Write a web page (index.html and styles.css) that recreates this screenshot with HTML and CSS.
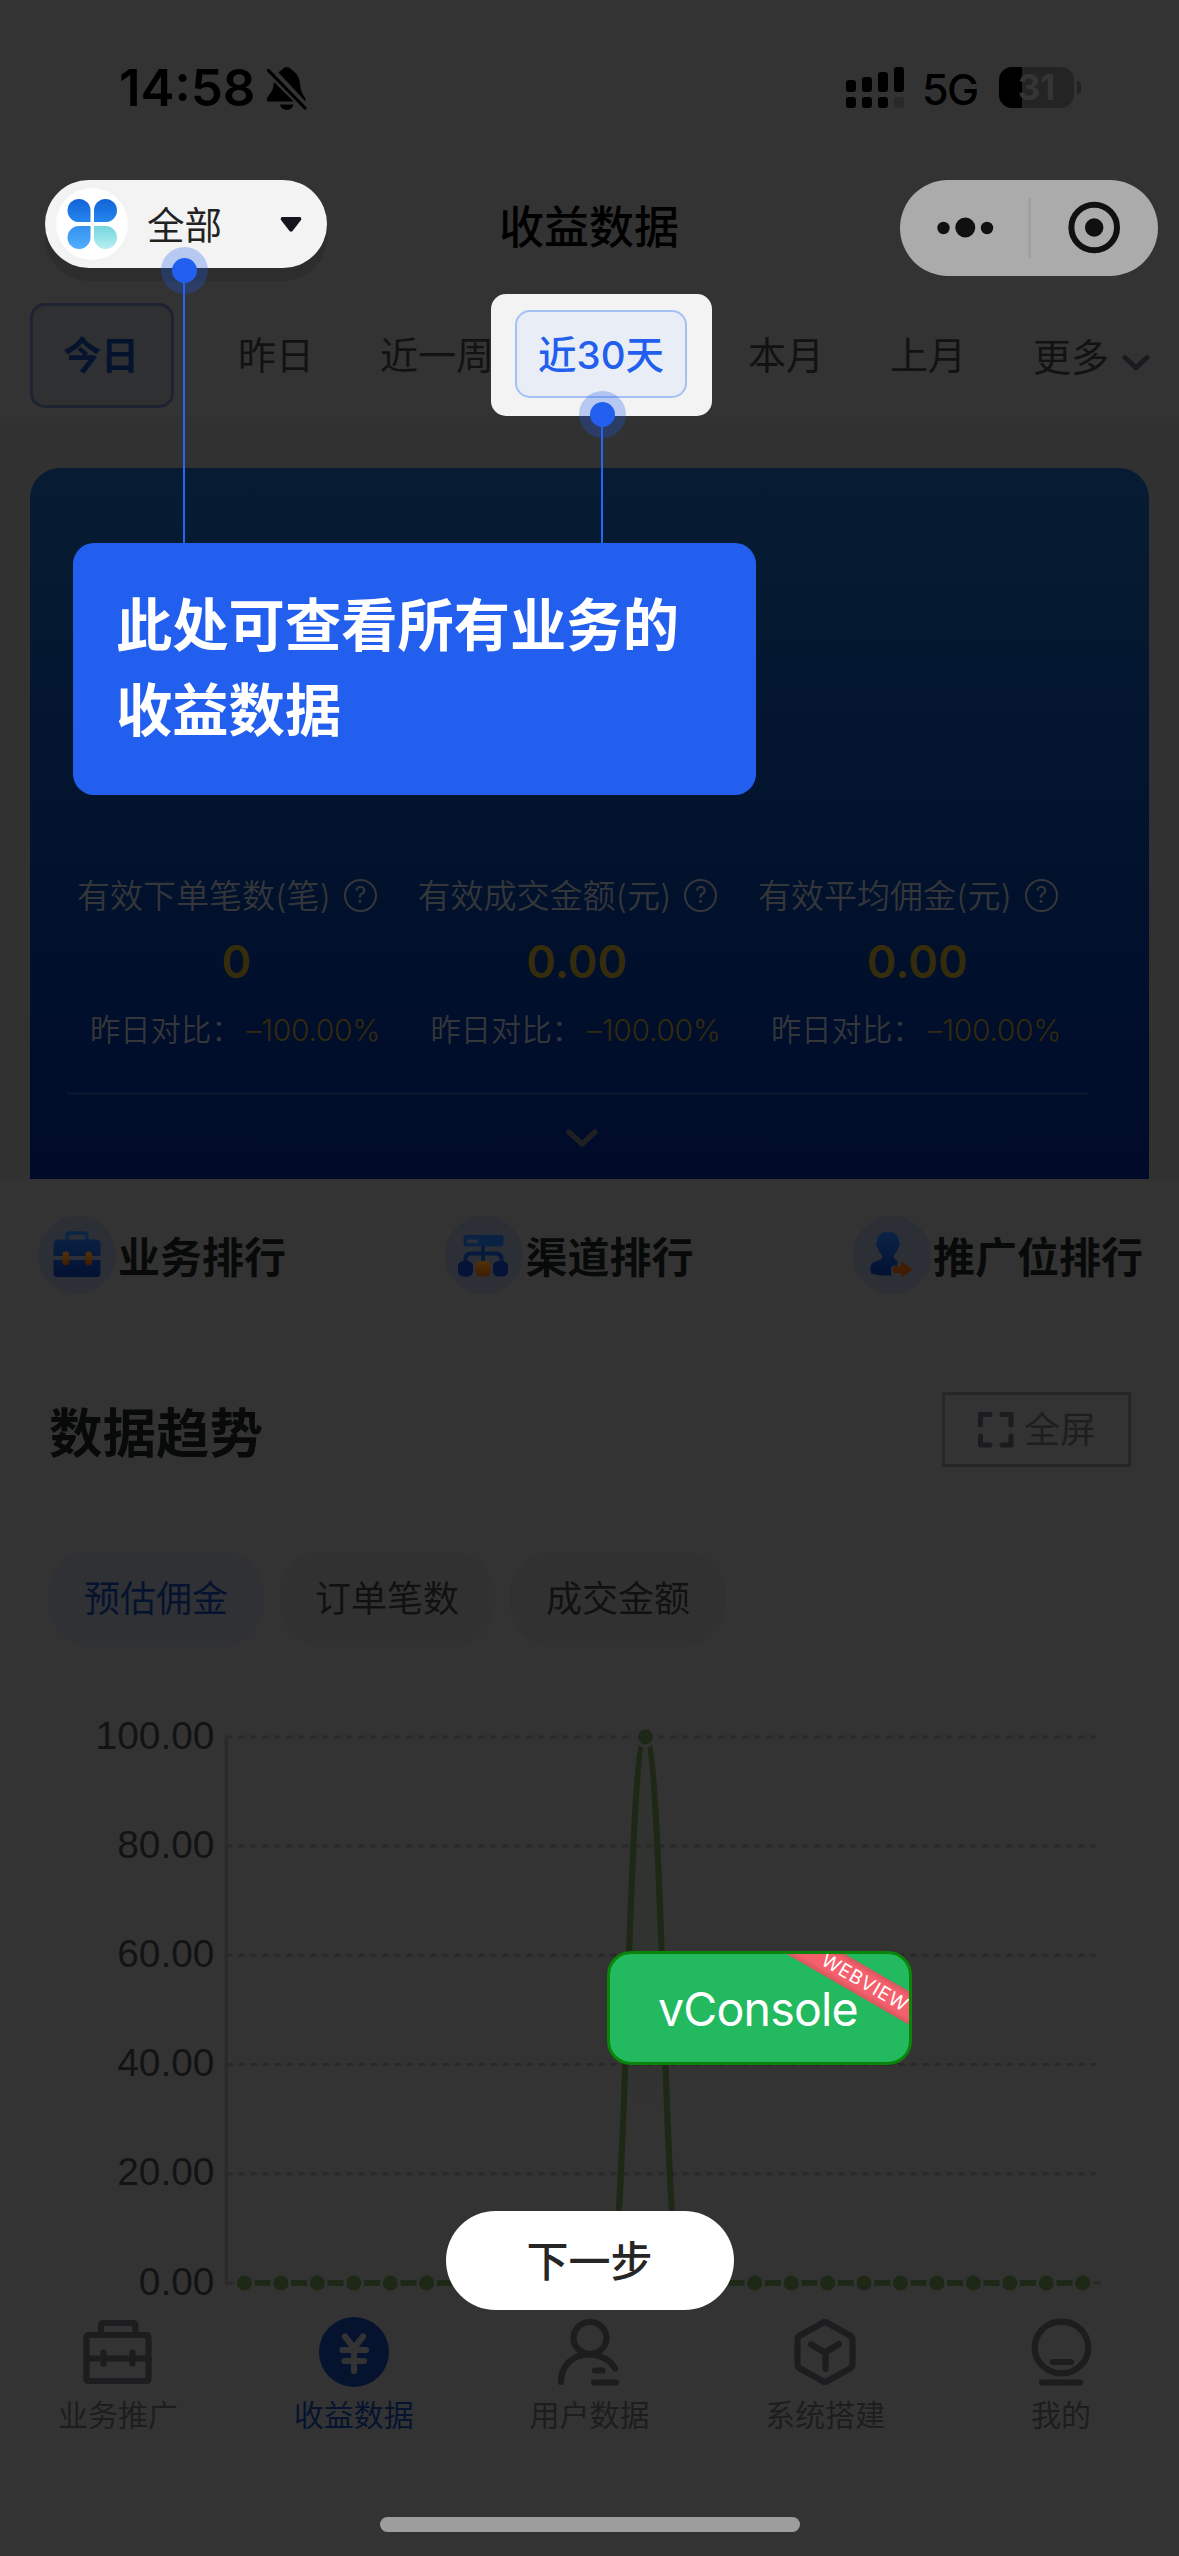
FILE: index.html
```html
<!DOCTYPE html>
<html lang="zh-CN">
<head>
<meta charset="utf-8">
<title>收益数据</title>
<link rel="stylesheet" href="styles.css">
</head>
<body>
<div class="screen">
  <header class="top">
    <div class="status">
      <span class="clock">14:58</span>
      <svg class="bell" viewBox="0 0 42 44" width="42" height="44">
        <path d="M12.500 5.500C15 2.800 16 3.500 17 1.500C18.500-.3 23-.3 24.500 1.500C25.500 3.500 31 5 33 12C35 20 33.500 23 39.500 31.500L39.500 34.500Z"/>
        <path d="M8 15C7 22 6.500 24 3 28C.5 31 .5 33 1.500 34.500H27.500Z"/>
        <path d="M14 37.500H27.500C26.500 44.500 15 44.500 14 37.500Z"/>
        <path d="M2.500 3.500L39 41" fill="none" stroke="#000" stroke-width="3.200" stroke-linecap="round"/>
      </svg>
      <svg class="signal" viewBox="0 0 58 41" width="58" height="41">
        <rect x="0" y="13" width="10" height="12" rx="3"/><rect x="16" y="10" width="10" height="15" rx="3"/>
        <rect x="32" y="5" width="10" height="20" rx="3"/><rect x="48" y="0" width="10" height="25" rx="3"/>
        <rect x="0" y="30" width="10" height="11" rx="3"/><rect x="16" y="30" width="10" height="11" rx="3"/>
        <rect x="32" y="30" width="10" height="11" rx="3"/><rect x="48" y="30" width="10" height="11" rx="3" fill="#292929"/>
      </svg>
      <span class="net">5G</span>
      <div class="battery">31</div>
      <i class="battery-cap"></i>
    </div>

    <div class="nav">
      <div class="picker">
        <span class="picker-icon">
          <svg viewBox="0 0 72 72" width="72" height="72">
            <defs>
              <linearGradient id="pa" x1="0" y1="0" x2="0" y2="1"><stop offset="0" stop-color="#1263d9"/><stop offset="1" stop-color="#2686ed"/></linearGradient>
              <linearGradient id="pb" x1="0" y1="0" x2="0" y2="1"><stop offset="0" stop-color="#3491ee"/><stop offset="1" stop-color="#52aeff"/></linearGradient>
              <linearGradient id="pc" x1="0" y1="0" x2="0" y2="1"><stop offset="0" stop-color="#73d6dd"/><stop offset="1" stop-color="#b8eff2"/></linearGradient>
            </defs>
            <path fill="url(#pa)" d="M34.500 34H23A11.500 11.500 0 1 1 34.500 22.500Z"/>
            <path fill="url(#pa)" d="M38 34V22.500A11.500 11.500 0 1 1 49.500 34Z"/>
            <path fill="url(#pb)" d="M34.500 38V49A11.500 11.500 0 1 1 23 38Z"/>
            <path fill="url(#pc)" d="M38 38H49.500A11.500 11.500 0 1 1 38 49Z"/>
          </svg>
        </span>
        <span class="picker-text">全部</span>
        <svg class="caret" viewBox="0 0 22 15" width="22" height="15"><path fill="#15141f" d="M2 0H20Q22 1 21 3L12.500 14Q11 15.500 9.500 14L1 3Q0 1 2 0Z"/></svg>
      </div>
      <h1 class="title">收益数据</h1>
      <svg class="capsule" viewBox="0 0 258 96" width="258" height="96">
        <rect width="258" height="96" rx="48" fill="#ababab"/>
        <path d="M129.500 18V78" stroke="#9a9a9a" stroke-width="1.500"/>
        <g fill="#101010"><circle cx="43.500" cy="48" r="6.200"/><circle cx="65.300" cy="47.500" r="10"/><circle cx="87" cy="48" r="6.200"/><circle cx="194.200" cy="47.500" r="9.200"/></g>
        <circle cx="194.200" cy="47.500" r="22.800" fill="none" stroke="#101010" stroke-width="6"/>
      </svg>
    </div>

    <div class="tabs">
      <span class="tab tab-on">今日</span>
      <span class="tab t2">昨日</span>
      <span class="tab t3">近一周</span>
      <span class="spot"><span class="spot-tab">近30天</span></span>
      <span class="tab t5">本月</span>
      <span class="tab t6">上月</span>
      <span class="tab t7">更多</span>
      <svg class="more" viewBox="0 0 28 18" width="28" height="18"><path d="M3 3.500L14 14L25 3.500" fill="none" stroke="#1b1b1f" stroke-width="5" stroke-linecap="round" stroke-linejoin="round"/></svg>
    </div>
  </header>

  <section class="summary">
    <div class="card">
      <div class="stats">
        <div class="stat">
          <div class="stat-name">有效下单笔数(笔)<i class="help">?</i></div>
          <div class="stat-value">0</div>
          <div class="stat-diff">昨日对比：<b>–100.00%</b></div>
        </div>
        <div class="stat">
          <div class="stat-name">有效成交金额(元)<i class="help">?</i></div>
          <div class="stat-value">0.00</div>
          <div class="stat-diff">昨日对比：<b>–100.00%</b></div>
        </div>
        <div class="stat">
          <div class="stat-name">有效平均佣金(元)<i class="help">?</i></div>
          <div class="stat-value">0.00</div>
          <div class="stat-diff">昨日对比：<b>–100.00%</b></div>
        </div>
      </div>
      <div class="expand">
        <svg viewBox="0 0 34 20" width="34" height="20"><path d="M4 4L17 16L30 4" fill="none" stroke="#202022" stroke-width="5.500" stroke-linecap="round" stroke-linejoin="round"/></svg>
      </div>
    </div>
  </section>

  <section class="ranks">
    <div class="rank">
      <svg viewBox="0 0 78 78" width="78" height="78">
        <defs>
          <linearGradient id="bl" gradientUnits="userSpaceOnUse" x1="0" y1="15" x2="0" y2="61"><stop offset="0" stop-color="#0b2547"/><stop offset="1" stop-color="#031031"/></linearGradient>
          <linearGradient id="og" x1="0" y1="0" x2="0" y2="1"><stop offset="0" stop-color="#503307"/><stop offset="1" stop-color="#401b02"/></linearGradient>
        </defs>
        <circle cx="39" cy="39" r="39" fill="#2d2f36"/>
        <path d="M29 25V20Q29 17 32 17H46Q49 17 49 20V25" fill="none" stroke="#0b2547" stroke-width="3.500"/>
        <path fill="url(#bl)" d="M20 23.500H58Q62.500 23.500 62.500 28V40H15.500V28Q15.500 23.500 20 23.500ZM15.500 44H62.500V57Q62.500 61 58.500 61H19.500Q15.500 61 15.500 57Z"/>
        <rect x="24.500" y="35.500" width="6.500" height="14" rx="3.200" fill="url(#og)"/><rect x="47.500" y="35.500" width="6.500" height="14" rx="3.200" fill="url(#og)"/>
      </svg>
      <span>业务排行</span>
    </div>
    <div class="rank">
      <svg viewBox="0 0 78 78" width="78" height="78">
        <circle cx="39" cy="39" r="39" fill="#2d2f36"/>
        <path d="M38 28V46M20.500 46V43Q20.500 37.500 26 37.500H51Q56.500 37.500 56.500 43V46" fill="none" stroke="#061a3c" stroke-width="4"/>
        <rect x="18.500" y="19" width="40" height="11.500" rx="3" fill="#0a2244"/><rect x="22" y="23.500" width="11" height="3.500" rx="1" fill="#2d3138"/>
        <rect x="13" y="45" width="15" height="15.500" rx="5.500" fill="#051436"/><rect x="48" y="45" width="15" height="15.500" rx="5.500" fill="#051436"/>
        <rect x="30.500" y="45" width="15" height="15.500" rx="5" fill="url(#og)"/>
      </svg>
      <span>渠道排行</span>
    </div>
    <div class="rank">
      <svg viewBox="0 0 78 78" width="78" height="78">
        <circle cx="39" cy="39" r="39" fill="#2d2f36"/>
        <path fill="url(#bl)" d="M35 15.500C42 15.500 46 20 46 26C47.500 27.500 46.500 31 45 32.500C44 37 41 38 40.500 41C41 44 44.500 43 44.500 47V49.500H41Q38 50 38 53Q38 56 38.500 59.500C28 60 21 58.500 18 57.500C17 52 17 49 20 46.500C24 44 29 45 29.500 41C29 38 26 37 25 32.500C23 31 22.500 28 24 26C24 19 29 15.500 35 15.500Z"/>
        <path fill="#401c02" d="M40 50.500H48V45.500L60 53.500L48 61.500V57H40Z"/>
      </svg>
      <span>推广位排行</span>
    </div>
  </section>

  <section class="trend-head">
    <h2>数据趋势</h2>
    <div class="full">
      <svg viewBox="0 0 36 36" width="36" height="36"><path d="M2.500 13V2.500H12M24 2.500H33V13M33 24V33H24M12 33H2.500V24" fill="none" stroke="#1c1c20" stroke-width="5" stroke-linecap="round" stroke-linejoin="round"/></svg>
      <span>全屏</span>
    </div>
  </section>

  <section class="chips">
    <span class="chip chip-on">预估佣金</span>
    <span class="chip">订单笔数</span>
    <span class="chip">成交金额</span>
  </section>

  <svg class="chart" viewBox="0 1700 1179 600" width="1179" height="600">
    <defs>
      <marker id="dot" markerUnits="userSpaceOnUse" markerWidth="24" markerHeight="24" refX="12" refY="12" orient="0">
        <circle cx="12" cy="12" r="10.500" fill="#333"/><circle cx="12" cy="12" r="7.500" fill="#1e2816"/>
      </marker>
      <linearGradient id="area" x1="0" y1="0" x2="0" y2="1"><stop offset="0" stop-color="#30332f"/><stop offset="1" stop-color="#333"/></linearGradient>
    </defs>
    <g class="y-labels">
      <text x="214.500" y="1748.500">100.00</text><text x="214.500" y="1857.500">80.00</text><text x="214.500" y="1966.500">60.00</text>
      <text x="214.500" y="2075.500">40.00</text><text x="214.500" y="2184.500">20.00</text><text x="214.500" y="2294.500">0.00</text>
    </g>
    <path d="M608.900 2283C627.100 2283 627.100 1737 645.400 1737C663.600 1737 663.600 2283 681.800 2283Z" fill="url(#area)"/>
    <path class="grid" d="M226.500 1737H1098M226.500 1846H1098M226.500 1955.300H1098M226.500 2064.500H1098M226.500 2173.700H1098"/>
    <path class="axis" d="M226.300 1737V2283H1101"/>
    <path class="line" marker-start="url(#dot)" marker-mid="url(#dot)" marker-end="url(#dot)" d="M244.500 2283L280.900 2283L317.400 2283L353.800 2283L390.300 2283L426.700 2283L463.200 2283L499.600 2283L536 2283L572.500 2283L608.900 2283C627.100 2283 627.100 1737 645.400 1737C663.600 1737 663.600 2283 681.800 2283L718.300 2283L754.700 2283L791.200 2283L827.600 2283L864 2283L900.500 2283L936.900 2283L973.400 2283L1009.800 2283L1046.300 2283L1082.700 2283"/>
  </svg>

  <nav class="tabbar">
    <div class="item">
      <svg viewBox="0 0 72 72" width="72" height="72"><path d="M19 18V9.500Q19 7 21.500 7H51Q53.500 7 53.500 9.500V18M4.500 21.500Q4.500 19 7 19H64Q66.500 19 66.500 21.500V62.500Q66.500 65 64 65H7Q4.500 65 4.500 62.500ZM5 42.500H67M21.500 36.500V47.500M50.500 36.500V47.500"/></svg>
      <span>业务推广</span>
    </div>
    <div class="item item-on">
      <svg viewBox="0 0 72 72" width="72" height="72"><circle cx="36" cy="36" r="35" fill="#06132f" stroke="none"/><path d="M27 20.500L36 32L45 20.500M24.500 34H48M26.500 45H46M36 33V55" stroke="#333"/></svg>
      <span>收益数据</span>
    </div>
    <div class="item">
      <svg viewBox="0 0 72 72" width="72" height="72"><ellipse cx="37" cy="22" rx="16.500" ry="16"/><path d="M8 66C8 50 19 38.500 36 38.500C48 38.500 58 45 62 52.500M42 54.500H49.500M41 66.500H63"/></svg>
      <span>用户数据</span>
    </div>
    <div class="item">
      <svg viewBox="0 0 72 72" width="72" height="72"><path d="M33.500 7Q36 5.500 38.500 7L61 19.500Q63.500 21 63.500 24V48Q63.500 51 61 52.500L38.500 65Q36 66.500 33.500 65L11 52.500Q8.500 51 8.500 48V24Q8.500 21 11 19.500ZM22 28.500L36 36.500L50 28M36.500 37V53"/></svg>
      <span>系统搭建</span>
    </div>
    <div class="item">
      <svg viewBox="0 0 72 72" width="72" height="72"><ellipse cx="36.500" cy="31.500" rx="26.800" ry="25.800"/><path d="M28 46H46M17 66.500H55"/></svg>
      <span>我的</span>
    </div>
  </nav>
  <div class="home"></div>

  <!-- guide layer -->
  <i class="wire wire-a"></i>
  <i class="wire wire-b"></i>
  <i class="pin pin-a"></i>
  <i class="pin pin-b"></i>
  <div class="tip">此处可查看所有业务的<br>收益数据</div>
  <div class="vconsole">vConsole<span class="ribbon">WEBVIEW</span></div>
  <div class="next">下一步</div>
</div>
</body>
</html>
```
FILE: styles.css
```css
* { box-sizing: border-box; }
body {
  margin: 0;
  background: #333;
  font-family: Inter, "Noto Sans CJK SC", sans-serif;
}
h1, h2 { margin: 0; }
i, b { font-style: normal; font-weight: 400; }
svg { display: block; flex: none; }
.screen {
  position: relative;
  width: 1179px;
  height: 2556px;
  overflow: hidden;
  display: flex;
  flex-direction: column;
}

/* status bar */
.top { height: 417px; flex: none; }
.status {
  height: 180px;
  padding: 67px 0 0 119px;
  display: flex;
  align-items: flex-start;
}
.clock { width: 147px; font-size: 51px; line-height: 42px; font-weight: 600; color: #000; white-space: nowrap; }
.signal { margin-left: 538px; }
.net { width: 77px; margin-left: 18px; font-size: 43px; line-height: 45px; font-weight: 450; color: #000; letter-spacing: -1.500px; }
.battery {
  width: 75px;
  height: 41px;
  border-radius: 13px;
  background: linear-gradient(90deg, #000 23px, #242424 23px);
  color: #353535;
  font-size: 35px;
  line-height: 41px;
  font-weight: 700;
  text-align: center;
}
.battery-cap { width: 4px; height: 13px; margin: 14px 0 0 3px; border-radius: 0 4px 4px 0; background: #222; }

/* navigation */
.nav { height: 96px; padding: 0 21px 0 45px; display: flex; align-items: flex-start; }
.picker {
  width: 282px;
  height: 88px;
  padding-left: 11px;
  border-radius: 44px;
  background: #f3f3f3;
  box-shadow: 0 13px 0 #2d2d2d;
  display: flex;
  align-items: center;
}
.picker-icon { width: 72px; height: 72px; border-radius: 50%; background: #fff; }
.picker-text { width: 133px; margin-left: 19px; padding-top: 3px; font-size: 37.500px; line-height: 88px; color: #222; }
.title { margin-left: 172px; width: 401px; font-size: 45px; line-height: 95px; font-weight: 500; color: #000; }

/* period tabs */
.tabs { height: 141px; padding: 18px 0 0 30px; display: flex; align-items: flex-start; white-space: nowrap; }
.tab { margin-top: 9px; font-size: 38px; line-height: 105px; color: #121212; }
.tab-on {
  width: 144px;
  height: 105px;
  padding-right: 2px;
  border: 3px solid #1d2331;
  border-radius: 15px;
  background: #2f3031;
  line-height: 99px;
  font-weight: 600;
  text-align: center;
  color: #06132f;
}
.t2 { margin-left: 64px; width: 142px; }
.t3 { width: 111px; }
.t5 { margin-left: 36px; width: 142px; }
.t6 { width: 143px; }
.t7 { width: 89px; padding-top: 2px; }
.more { margin-top: 60px; }
.spot {
  position: relative;
  width: 221px;
  height: 122px;
  padding: 16px 25px 18px 24px;
  border-radius: 15px;
  background: #f3f3f3;
}
.spot-tab {
  display: block;
  height: 88px;
  border: 2px solid #a5c0f6;
  border-radius: 15px;
  background: #e9edf5;
  font-size: 38.500px;
  line-height: 87px;
  font-weight: 500;
  text-align: center;
  color: #225fee;
}

/* summary card */
.summary { height: 762px; flex: none; padding: 51px 30px 0; background: #313131; }
.card {
  height: 711px;
  padding: 406px 61px 0 36px;
  border-radius: 30px 30px 0 0;
  background: linear-gradient(180deg, #071c33 0%, #03142e 45%, #000f2b 75%, #000b2a 100%);
}
.stats { height: 221px; display: flex; border-bottom: 3px solid #0a142d; }
.stat { width: 340.500px; flex: none; white-space: nowrap; }
.stat-name { height: 45px; padding-left: 11px; display: flex; align-items: center; font-size: 33px; line-height: 45px; font-weight: 350; color: #34363a; }
.help {
  width: 33px;
  height: 33px;
  margin: -2px 0 0 13px;
  border: 2.500px solid #34363a;
  border-radius: 50%;
  font-size: 23px;
  line-height: 28px;
  text-align: center;
}
.stat-value { margin-top: 16px; height: 54px; font-size: 45px; line-height: 54px; font-weight: 600; text-align: center; color: #352c0c; }
.stat-diff { margin-top: 19px; padding-left: 24px; display: flex; font-size: 30.300px; line-height: 44px; font-weight: 350; color: #34363a; }
.stat-diff b { margin-left: 5px; font-size: 30px; font-weight: 350; letter-spacing: -.3px; color: #332a0d; }
.expand { height: 84px; padding: 33px 0 0 499px; }

/* ranking entries */
.ranks { height: 192px; flex: none; padding: 37px 36px 0 38px; display: flex; justify-content: space-between; align-items: flex-start; }
.rank { display: flex; align-items: center; gap: 2px; font-size: 42px; line-height: 78px; font-weight: 600; color: #070a09; white-space: nowrap; }
.rank span { padding-top: 3px; margin-bottom: -3px; }

/* trend header */
.trend-head { height: 180px; flex: none; padding: 21px 48px 0 49px; display: flex; justify-content: space-between; align-items: flex-start; }
h2 { font-size: 53.500px; line-height: 84px; font-weight: 700; color: #070a09; }
.full {
  width: 189px;
  height: 75px;
  padding-left: 33px;
  border: 3px solid #262626;
  display: flex;
  align-items: center;
  gap: 10px;
  font-size: 36px;
  line-height: 66px;
  color: #1e1e21;
}

/* metric chips */
.chips { height: 149px; flex: none; padding-left: 48px; display: flex; align-items: flex-start; gap: 15px; }
.chip { width: 216px; height: 96px; border-radius: 44px; background: #313131; font-size: 36px; line-height: 96px; text-align: center; color: #111; }
.chip-on { background: #303134; color: #06132f; }

/* chart */
.chart { flex: none; }
.y-labels text { font: 38.900px "Liberation Sans", Arial, sans-serif; fill: #131313; text-anchor: end; }
.grid { fill: none; stroke: #292929; stroke-width: 3; stroke-dasharray: 6 6; }
.axis { fill: none; stroke: #292929; stroke-width: 3; }
.line { fill: none; stroke: #1e2816; stroke-width: 6; }

/* bottom tab bar */
.tabbar { height: 217px; flex: none; padding-top: 16px; display: grid; grid-template-columns: repeat(5, 1fr); }
.item { display: flex; flex-direction: column; align-items: center; gap: 5px; font-size: 30px; line-height: 44px; color: #1d1d1e; }
.item svg { fill: none; stroke: #1d1d1f; stroke-width: 6.200; stroke-linecap: round; stroke-linejoin: round; }
.item-on { color: #06132f; }
.home { width: 420px; height: 15px; flex: none; margin-left: 380px; border-radius: 8px; background: #9d9d9d; }

/* guide overlay */
.wire { position: absolute; width: 2px; background: #2666f5; }
.wire-a { left: 183px; top: 271px; height: 273px; }
.wire-b { left: 601px; top: 415px; height: 129px; }
.pin {
  position: absolute;
  width: 25px;
  height: 25px;
  border-radius: 50%;
  background: #225fee;
  box-shadow: 0 0 0 11px rgba(34, 95, 238, .28);
}
.pin-a { left: 172px; top: 258px; }
.pin-b { left: 590px; top: 402px; }
.tip {
  position: absolute;
  left: 73px;
  top: 543px;
  width: 683px;
  height: 252px;
  padding: 40px 0 0 43px;
  border-radius: 21px;
  background: #225fee;
  font-size: 56.300px;
  line-height: 85px;
  font-weight: 700;
  color: #fff;
  white-space: nowrap;
}
.vconsole {
  position: absolute;
  left: 607px;
  top: 1951px;
  width: 305px;
  height: 114px;
  padding-left: 48px;
  border: 3px solid #0a850a;
  border-radius: 24px;
  overflow: hidden;
  background: #22b95f;
  font-size: 46.500px;
  line-height: 110px;
  letter-spacing: -.8px;
  color: #fff;
}
.ribbon {
  position: absolute;
  left: 155px;
  top: 14px;
  width: 200px;
  height: 29px;
  transform: rotate(30deg);
  background: linear-gradient(180deg, #d4565f, #f4606c 20%, #f4606c 80%, #d4565f);
  font-size: 19px;
  line-height: 29px;
  letter-spacing: .8px;
  text-align: center;
}
.next {
  position: absolute;
  left: 446px;
  top: 2211px;
  width: 288px;
  height: 99px;
  padding-right: 1px;
  border-radius: 50px;
  background: #fff;
  font-size: 42px;
  line-height: 101px;
  font-weight: 500;
  text-align: center;
  color: #262626;
}
```
